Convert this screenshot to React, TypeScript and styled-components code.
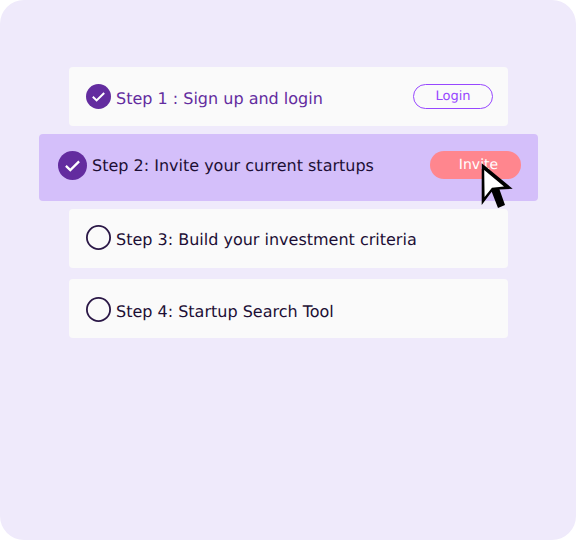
import React from 'react';
import styled, { createGlobalStyle } from 'styled-components';

const GlobalStyle = createGlobalStyle`
  html, body {
    margin: 0;
    padding: 0;
    background: #ffffff;
  }
`;

const Panel = styled.div`
  width: 576px;
  height: 540px;
  box-sizing: border-box;
  padding: 67px 38px 0 39px;
  border-radius: 24px;
  background-color: #efeafb;
  font-family: 'DejaVu Sans', sans-serif;
  text-rendering: geometricPrecision;
  display: flex;
  flex-direction: column;
  align-items: center;
`;

const StepRow = styled.div<{ $tone: string }>`
  width: 439px;
  height: 59px;
  box-sizing: border-box;
  margin-bottom: 8px;
  padding: 0 15px 0 17px;
  display: flex;
  align-items: center;
  gap: 5px;
  border-radius: 4px;
  background-color: #fafafa;
  color: ${(p) => p.$tone};
  font-size: 16px;

  &:nth-child(3) {
    margin-bottom: 11px;
  }
`;

const ActiveRow = styled.div`
  width: 499px;
  height: 67px;
  box-sizing: border-box;
  margin-bottom: 8px;
  padding: 0 17px 0 19px;
  display: flex;
  align-items: center;
  gap: 5px;
  border-radius: 4px;
  background-color: #d4bffa;
  color: #1d0f35;
  font-size: 16px;
  position: relative;
`;

const StepIcon = styled.svg<{ $size: number; $drop: number }>`
  width: ${(p) => p.$size}px;
  height: ${(p) => p.$size}px;
  flex: none;
  margin-top: ${(p) => p.$drop}px;
`;

const StepLabel = styled.span<{ $drop: number }>`
  flex: 1;
  white-space: nowrap;
  margin-top: ${(p) => p.$drop}px;
`;

const LoginButton = styled.button`
  width: 80px;
  height: 25px;
  padding: 0;
  border: 1px solid #9747ff;
  border-radius: 13px;
  background: transparent;
  color: #9747ff;
  font-family: inherit;
  font-size: 13px;
  text-rendering: inherit;
`;

const InviteButton = styled.button`
  width: 91px;
  height: 28px;
  margin-top: -5px;
  padding: 0 0 0 6px;
  border: 0;
  border-radius: 14px;
  background-color: #ff868e;
  color: #fff;
  font-family: inherit;
  font-size: 14px;
  text-rendering: inherit;
`;

const Cursor = styled.svg`
  position: absolute;
  left: 439px;
  top: 26px;
  width: 38px;
  height: 52px;
`;

const DoneIcon: React.FC<{ size: number; drop: number }> = ({ size, drop }) => (
  <StepIcon $size={size} $drop={drop} viewBox="0 0 25 25">
    <circle cx="12.5" cy="12.5" r="12.5" fill="#632c9f" />
    <path d="M6.8 12.8l3.8 3.6 7.6-7.4" fill="none" stroke="#fff" strokeWidth="2" />
  </StepIcon>
);

const OpenIcon: React.FC<{ drop: number }> = ({ drop }) => (
  <StepIcon $size={25} $drop={drop} viewBox="0 0 25 25">
    <circle cx="12.5" cy="12.5" r="11.6" fill="none" stroke="#2a1746" strokeWidth="1.8" />
  </StepIcon>
);

const App: React.FC = () => {
  return (
    <>
      <GlobalStyle />
      <Panel>
        <StepRow $tone="#632c9f">
          <DoneIcon size={25} drop={0} />
          <StepLabel $drop={4}>Step 1 : Sign up and login</StepLabel>
          <LoginButton>Login</LoginButton>
        </StepRow>
        <ActiveRow>
          <DoneIcon size={29} drop={-4} />
          <StepLabel $drop={-4}>Step 2: Invite your current startups</StepLabel>
          <InviteButton>Invite</InviteButton>
          <Cursor viewBox="0 0 38 52">
            <path d="M3.7 3.3L34.7 28.8 21.5 29.5 27 45l-7 3-6.3-16.3-10 13.3z" fill="#000" />
            <path d="M6.2 10L26 26.5l-12 1.2L6.6 37z" fill="#fff" />
          </Cursor>
        </ActiveRow>
        <StepRow $tone="#1d0f35">
          <OpenIcon drop={-2} />
          <StepLabel $drop={1}>Step 3: Build your investment criteria</StepLabel>
        </StepRow>
        <StepRow $tone="#1d0f35">
          <OpenIcon drop={1} />
          <StepLabel $drop={5}>Step 4: Startup Search Tool</StepLabel>
        </StepRow>
      </Panel>
    </>
  );
};

export default App;
